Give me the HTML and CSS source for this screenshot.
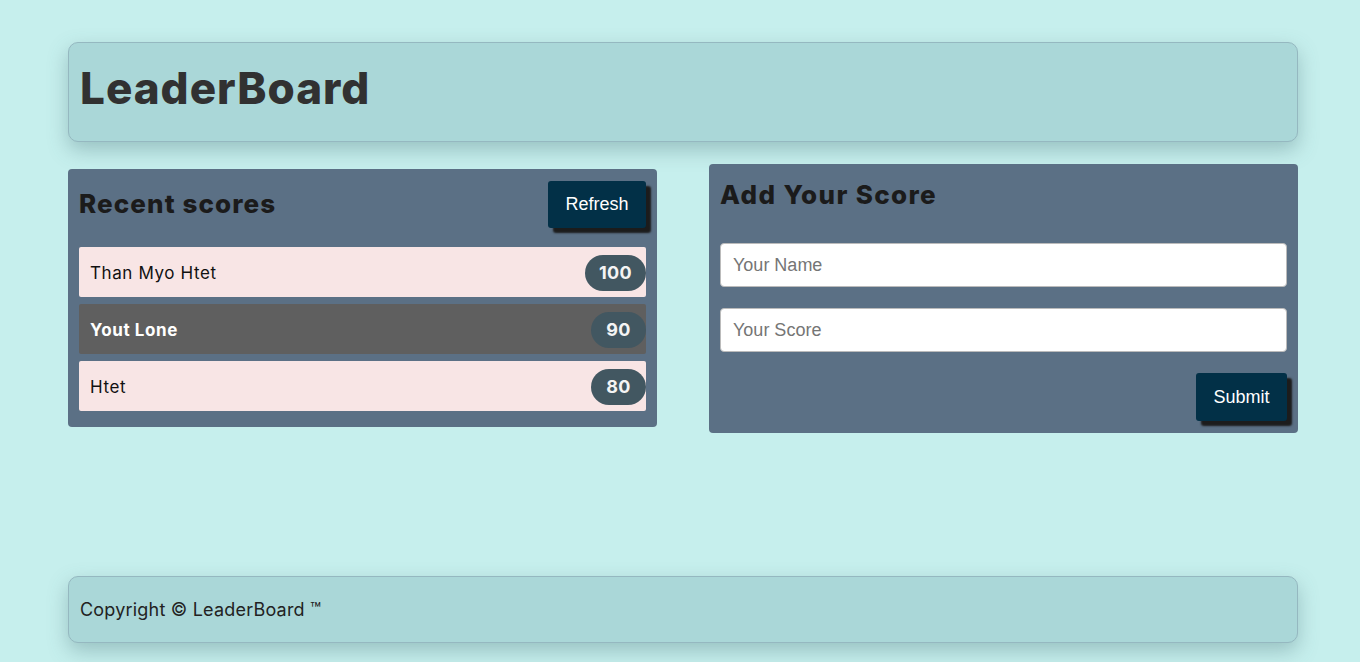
FILE: index.html
```html
<!DOCTYPE html>
<html lang="en">
<head>
<meta charset="utf-8">
<title>LeaderBoard</title>
<link rel="stylesheet" href="styles.css">
</head>
<body>
<div class="page">
  <header class="top">
    <h1 class="brand">LeaderBoard</h1>
  </header>
  <main class="main">
    <section class="panel panel-scores">
      <div class="panel-head">
        <h2 class="panel-title">Recent scores</h2>
        <button class="btn" type="button">Refresh</button>
      </div>
      <ul class="score-list">
        <li class="score-row"><span class="name">Than Myo Htet</span><span class="badge badge-wide">100</span></li>
        <li class="score-row score-row-dark"><span class="name">Yout Lone</span><span class="badge">90</span></li>
        <li class="score-row"><span class="name">Htet</span><span class="badge">80</span></li>
      </ul>
    </section>
    <section class="panel panel-form">
      <h2 class="panel-title form-title">Add Your Score</h2>
      <form class="form">
        <input class="field" type="text" placeholder="Your Name">
        <input class="field" type="text" placeholder="Your Score">
        <div class="form-actions"><button class="btn btn-submit" type="button">Submit</button></div>
      </form>
    </section>
  </main>
  <footer class="foot">
    <p class="copy">Copyright © LeaderBoard ™</p>
  </footer>
</div>
</body>
</html>
```
FILE: styles.css
```css
* { box-sizing: border-box; }
html, body { margin: 0; padding: 0; }
body {
  background: #c6efed;
  font-family: "Inter", "Open Sans", sans-serif;
  color: #222;
  height: 662px;
  overflow: hidden;
}
.page {
  width: 1230px;
  margin: 0 0 0 68px;
  padding-top: 42px;
}
.top {
  height: 100px;
  background: #aad7d8;
  border: 1px solid #95b8c0;
  border-radius: 10px;
  box-shadow: 0 8px 20px rgba(70, 110, 115, 0.35);
  padding: 0 11px;
  display: flex;
  align-items: center;
}
.brand {
  margin: 0 0 8px;
  font-size: 44px;
  font-weight: 800;
  color: #313131;
  letter-spacing: 1px;
}
.main {
  display: flex;
  justify-content: space-between;
  align-items: flex-start;
  margin-top: 22px;
  height: 412px;
}
.panel {
  width: 589px;
  background: #5b7085;
  border-radius: 4px;
}
.panel-scores {
  margin-top: 5px;
  padding: 12px 11px 16px;
}
.panel-head {
  display: flex;
  justify-content: space-between;
  align-items: center;
  height: 47px;
  margin-bottom: 19px;
}
.panel-title {
  margin: 0;
  font-size: 26px;
  font-weight: 800;
  color: #1b1b1b;
  letter-spacing: 1.1px;
}
.panel-scores .panel-title { margin-top: -2px; }
.btn {
  background: #023047;
  color: #fff;
  border: 0;
  border-radius: 3px;
  font-family: "Liberation Sans", Arial, sans-serif;
  font-size: 18px;
  height: 48px;
  padding: 0 18px;
  box-shadow: 5px 5px 2px #1c1c1c;
}
.panel-head .btn { height: 47px; width: 98px; padding: 0; }
.score-list {
  list-style: none;
  margin: 0;
  padding: 0;
  display: flex;
  flex-direction: column;
  gap: 7px;
}
.score-row {
  height: 50px;
  background: #f8e5e5;
  border-radius: 2px;
  display: flex;
  align-items: center;
  justify-content: space-between;
  padding-left: 11px;
  padding-top: 1px;
  font-size: 17px;
  color: #111;
  letter-spacing: 0.6px;
}
.score-row-dark {
  background: #5f5f5f;
  color: #fff;
  font-weight: 700;
}
.badge {
  background: #425761;
  color: #f4f4f4;
  font-weight: 700;
  font-size: 18px;
  height: 36px;
  width: 55px;
  border-radius: 18px;
  display: flex;
  align-items: center;
  justify-content: center;
  letter-spacing: 0.3px;
}
.badge-wide { width: 61px; }
.panel-form {
  padding: 11px;
  height: 269px;
}
.form-title { line-height: 40px; margin-bottom: 28px; letter-spacing: 1.35px; }
.form {
  display: flex;
  flex-direction: column;
  gap: 21px;
}
.field {
  height: 44px;
  width: 100%;
  border: 1px solid #bbb;
  border-radius: 4px;
  padding: 0 12px;
  font-family: "Liberation Sans", Arial, sans-serif;
  font-size: 18px;
  color: #333;
  background: #fff;
}
.field::placeholder { color: #757575; }
.form-actions {
  display: flex;
  justify-content: flex-end;
}
.btn-submit { width: 91px; padding: 0; }
.foot {
  height: 67px;
  background: #aad7d8;
  border: 1px solid #95b8c0;
  border-radius: 10px;
  box-shadow: 0 8px 20px rgba(70, 110, 115, 0.35);
  padding: 0 11px;
  display: flex;
  align-items: center;
}
.copy {
  margin: 0;
  font-size: 18px;
  color: #222;
  letter-spacing: 0.2px;
}
```
